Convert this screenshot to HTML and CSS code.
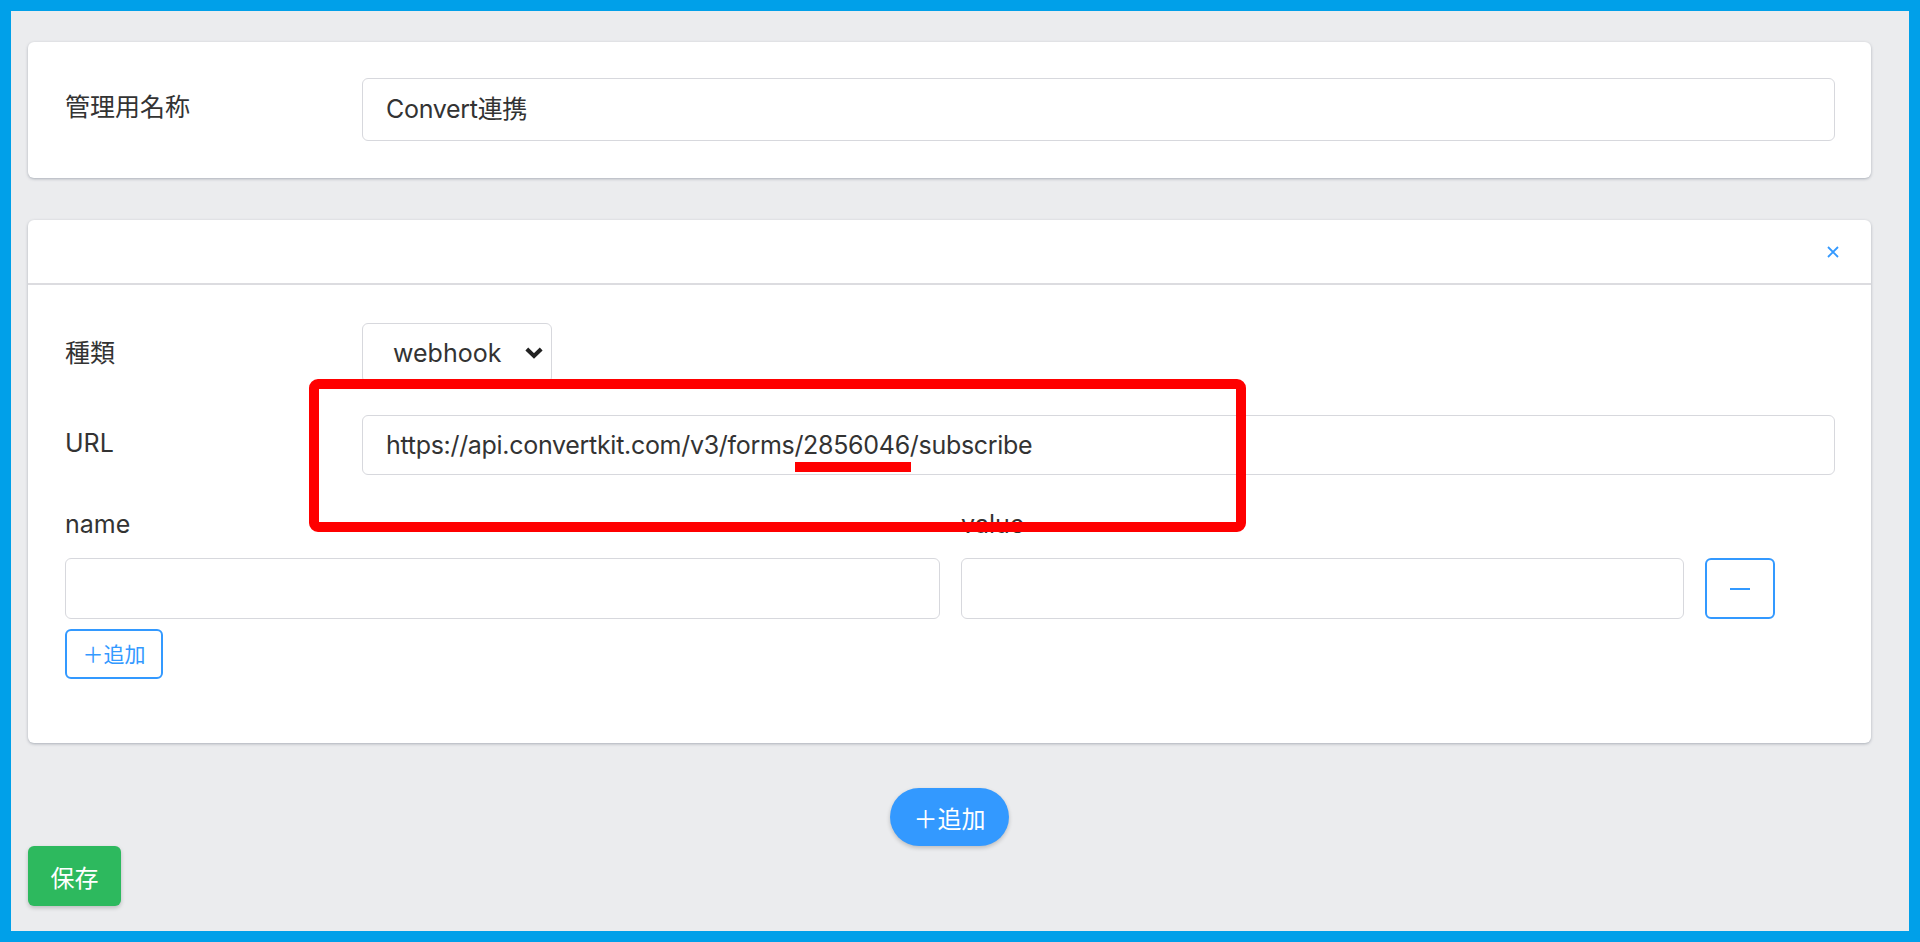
FILE: index.html
```html
<!DOCTYPE html>
<html lang="ja">
<head>
    <meta charset="UTF-8">
    <meta name="viewport" content="width=device-width, initial-scale=1.0">
    <title>連携設定</title>
    <link rel="stylesheet" href="styles.css">
</head>
<body>
    <div class="frame">
        <main class="page">
            <section class="card card-name">
                <div class="form-row">
                    <label class="form-label" for="nameInput">管理用名称</label>
                    <input type="text" id="nameInput" class="text-input input-tall" value="Convert連携">
                </div>
            </section>

            <section class="card card-action">
                <div class="card-header">
                    <button class="close-btn" title="削除">
                        <svg width="12" height="12" viewBox="0 0 12 12">
                            <path d="M1 1 L11 11 M11 1 L1 11" stroke="#3399ff" stroke-width="1.8" fill="none"/>
                        </svg>
                    </button>
                </div>
                <div class="card-body">
                    <div class="form-row">
                        <label class="form-label" for="typeSelect">種類</label>
                        <div class="select-wrap">
                            <select id="typeSelect" class="select">
                                <option>webhook</option>
                            </select>
                            <svg class="select-arrow" width="20" height="14" viewBox="0 0 20 14">
                                <path d="M2.8 3 L10 10 L17.2 3" stroke="#222" stroke-width="4" fill="none"/>
                            </svg>
                        </div>
                    </div>
                    <div class="form-row">
                        <label class="form-label" for="urlInput">URL</label>
                        <input type="text" id="urlInput" class="text-input" value="https://api.convertkit.com/v3/forms/2856046/subscribe">
                    </div>

                    <div class="params">
                        <div class="param-head">
                            <span class="col-name">name</span>
                            <span class="col-value">value</span>
                        </div>
                        <div class="param-row">
                            <input type="text" class="text-input param-input col-name">
                            <input type="text" class="text-input param-input col-value">
                            <button class="btn-minus">
                                <svg width="20" height="2" viewBox="0 0 20 2">
                                    <rect width="20" height="2" fill="#3399ff"/>
                                </svg>
                            </button>
                        </div>
                        <button class="btn-outline">＋追加</button>
                    </div>
                </div>

                <!-- annotation -->
                <div class="mark-box"></div>
                <div class="mark-line"></div>
            </section>

            <div class="add-wrap">
                <button class="btn-pill">＋追加</button>
            </div>
            <button class="btn-save">保存</button>
        </main>
    </div>
</body>
</html>
```

FILE: styles.css
```css
* {
    box-sizing: border-box;
}
body {
    margin: 0;
    font-family: Inter, "Noto Sans CJK JP", sans-serif;
    color: #333;
}
button, input, select {
    font-family: inherit;
}
.frame {
    width: 1920px;
    height: 942px;
    border: 11px solid #00a0e9;
    background-color: #ebecee;
    overflow: hidden;
}
.page {
    padding: 31px 38px 0 17px;
}
.card {
    background-color: #fff;
    border-radius: 6px;
    box-shadow: 0 1px 3px rgba(50, 60, 80, 0.35);
}
.card-name {
    padding: 36px 36px 37px 37px;
}
.form-row {
    display: flex;
    align-items: center;
}
.form-label {
    flex: 0 0 297px;
    padding-bottom: 5px;
    font-size: 25px;
    color: #333;
}
.card-name .form-label {
    padding-bottom: 10px;
}
.text-input {
    flex: 1;
    height: 60px;
    padding: 0 23px;
    border: 1.5px solid #d7d8dd;
    border-radius: 6px;
    font-size: 25px;
    letter-spacing: -0.3px;
    color: #333;
    background: #fff;
    outline: none;
}
.input-tall {
    height: 63px;
    padding-bottom: 6px;
}

/* action card */
.card-action {
    position: relative;
    margin-top: 42px;
}
.card-header {
    height: 65px;
    border-bottom: 2px solid #dcdce0;
    display: flex;
    justify-content: flex-end;
    align-items: center;
    padding-right: 32px;
}
.close-btn {
    border: none;
    background: none;
    padding: 0;
    width: 12px;
    height: 12px;
    display: flex;
    cursor: pointer;
}
.card-body {
    padding: 38px 36px 64px 37px;
}
.card-body .form-row + .form-row {
    margin-top: 32px;
}
.select-wrap {
    position: relative;
    width: 190px;
    height: 60px;
}
.select {
    appearance: none;
    -webkit-appearance: none;
    width: 100%;
    height: 100%;
    padding: 0 0 0 30px;
    border: 1.5px solid #d7d8dd;
    border-radius: 6px;
    background: #fff;
    font-size: 25px;
    color: #333;
}
.select-arrow {
    position: absolute;
    right: 8px;
    top: 23px;
    pointer-events: none;
}

.params {
    margin-top: 31px;
}
.param-head, .param-row {
    display: flex;
    gap: 21px;
}
.param-head {
    font-size: 25px;
    line-height: 36px;
    margin-bottom: 16px;
}
.col-name {
    flex: 0 0 875px;
}
.col-value {
    flex: 0 0 723px;
}
.param-input {
    height: 61px;
}
.btn-minus {
    width: 70px;
    height: 61px;
    border: 2px solid #3399ff;
    border-radius: 6px;
    background: #fff;
    display: flex;
    align-items: center;
    justify-content: center;
    cursor: pointer;
}
.btn-outline {
    margin-top: 10px;
    width: 98px;
    height: 50px;
    padding: 0 0 3px;
    border: 2px solid #3399ff;
    border-radius: 6px;
    background: #fff;
    color: #3399ff;
    font-size: 21px;
    cursor: pointer;
}

/* red annotation drawn over the screenshot */
.mark-box {
    position: absolute;
    left: 281px;
    top: 159px;
    width: 937px;
    height: 153px;
    border: 10px solid #ff0000;
    border-radius: 9px;
    pointer-events: none;
}
.mark-line {
    position: absolute;
    left: 767px;
    top: 242px;
    width: 116px;
    height: 10px;
    background-color: #ff0000;
}

.add-wrap {
    display: flex;
    justify-content: center;
    margin-top: 45px;
}
.btn-pill {
    width: 119px;
    height: 58px;
    border: none;
    border-radius: 29px;
    background-color: #3399ff;
    color: #fff;
    font-size: 24px;
    box-shadow: 0 2px 4px rgba(0, 0, 0, 0.2);
    cursor: pointer;
}
.btn-save {
    width: 93px;
    height: 60px;
    border: none;
    border-radius: 6px;
    background-color: #2db95e;
    color: #fff;
    font-size: 24px;
    box-shadow: 0 2px 4px rgba(0, 0, 0, 0.2);
    cursor: pointer;
}
```
